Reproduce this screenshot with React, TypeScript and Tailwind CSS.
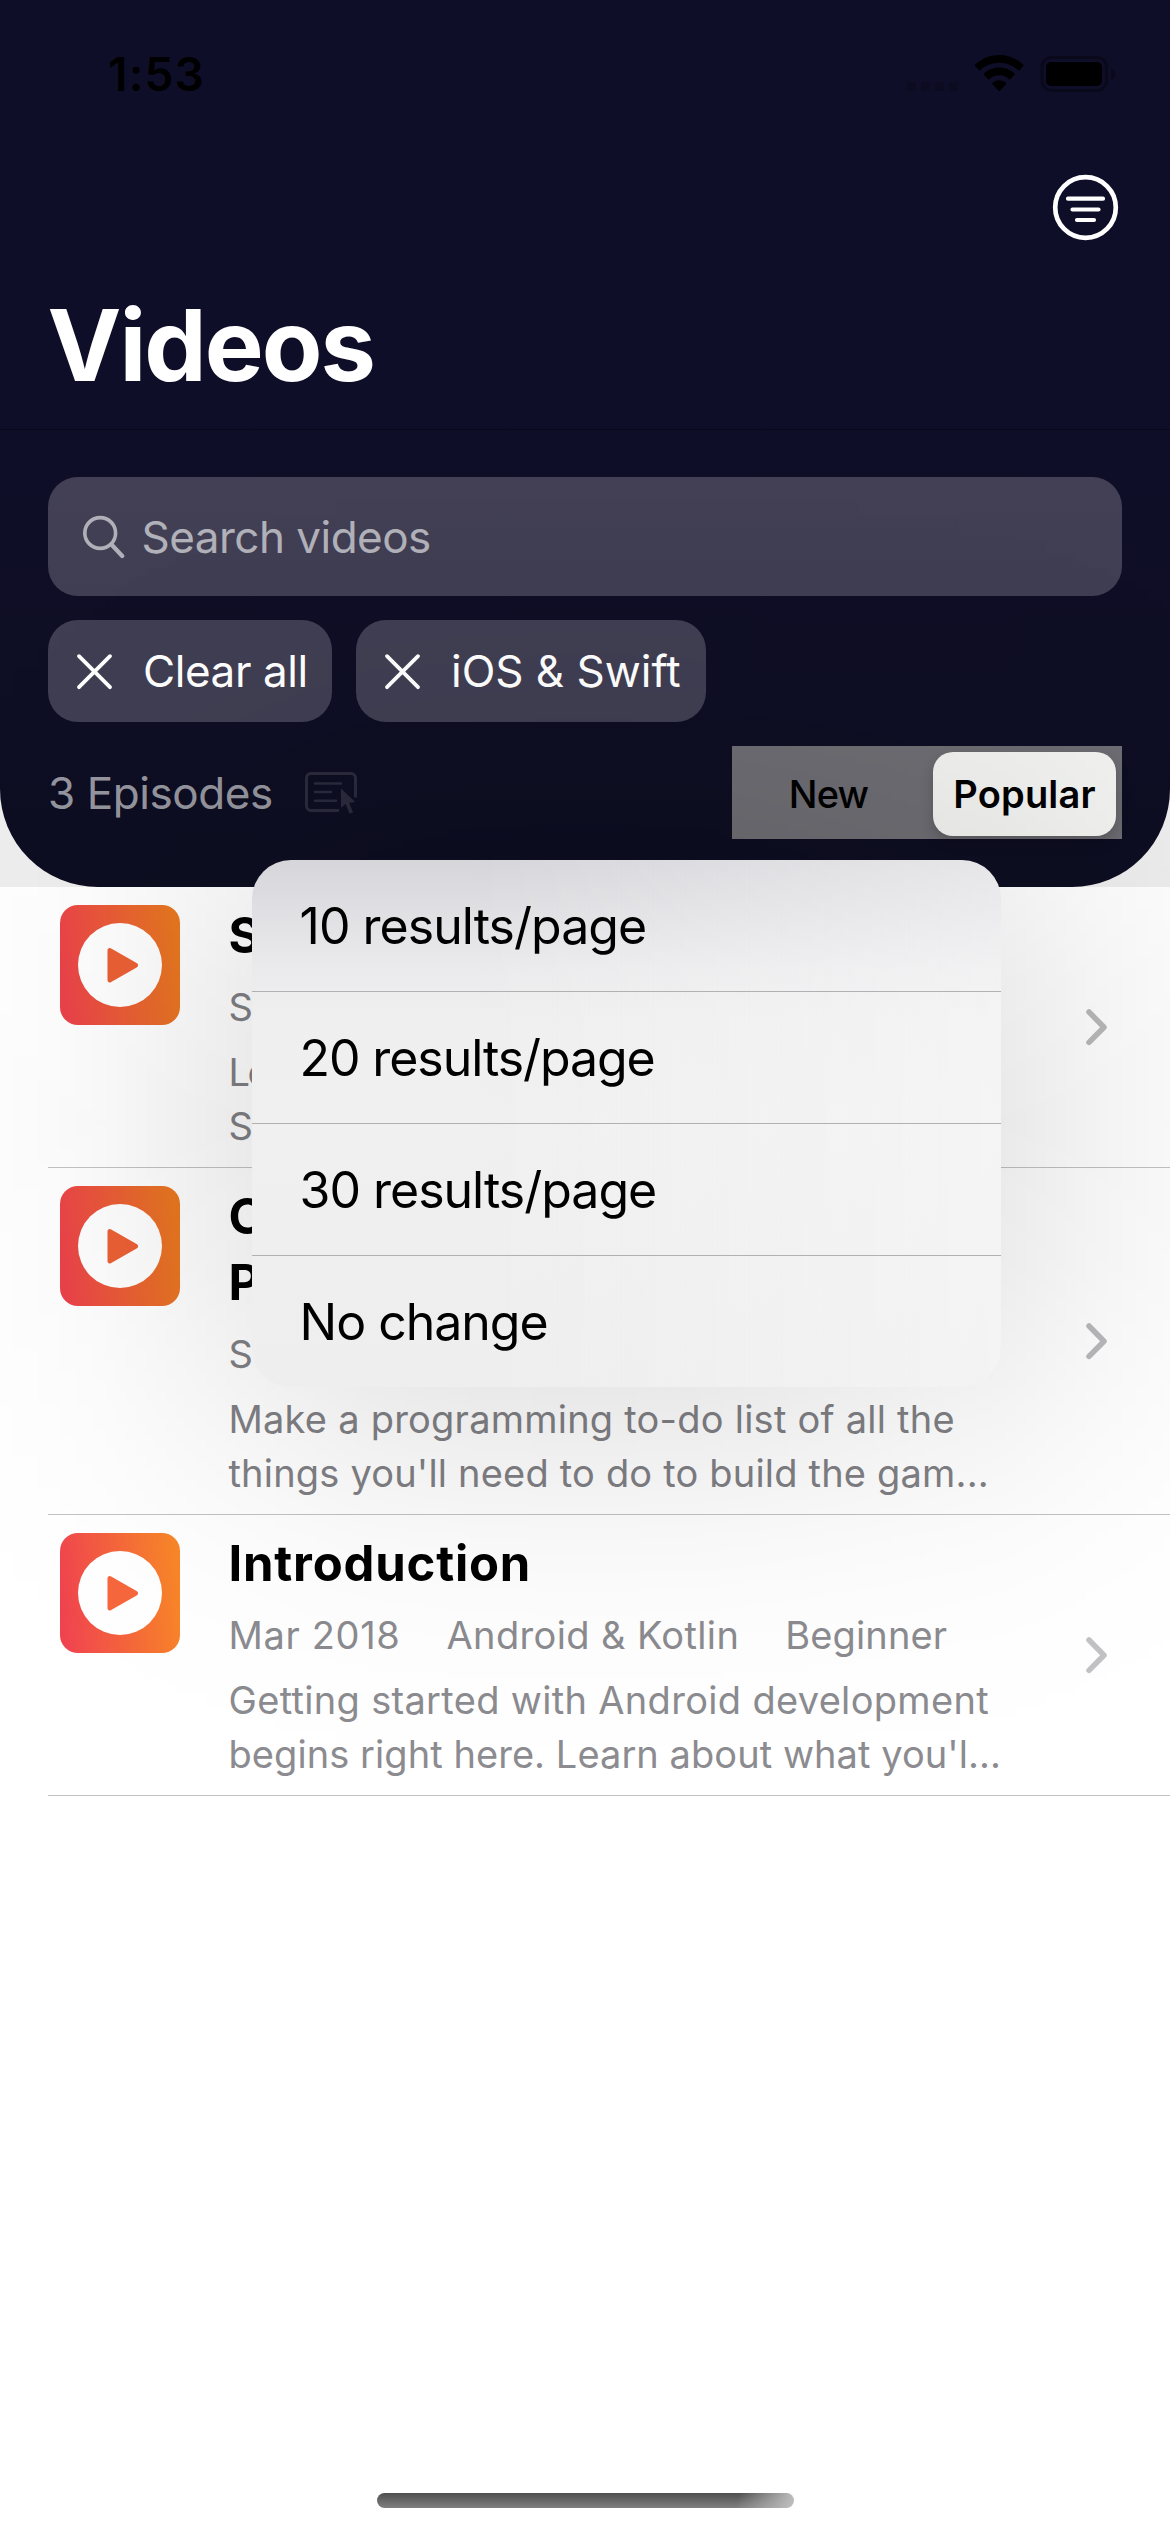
import React from "react";

function StatusBar() {
  return (
    <div className="flex h-[104px] justify-between pl-[108px] pr-[54px] text-black">
      <div className="mt-[44px] text-[46px] leading-[60px] font-semibold tracking-[1.18px]">1:53</div>
      <svg className="mt-[52px] h-[44px] w-[209px]" viewBox="907 52 209 44" fill="none">
        <g fill="#0c0b20">
          <rect x="907" y="82" width="9" height="9" rx="2.5" />
          <rect x="921" y="82" width="9" height="9" rx="2.5" />
          <rect x="935" y="82" width="9" height="9" rx="2.5" />
          <rect x="949" y="82" width="9" height="9" rx="2.5" />
        </g>
        <g fill="#000">
          <path d="M999.2 55c-9.400 0-17.900 3.700-24.200 9.700-.4.4-.4.8 0 1.200l3.900 4.300c.4.400.9.400 1.300 0 5-4.700 11.700-7.500 19-7.500s14 2.800 19 7.500c.4.400.900.400 1.300 0l3.900-4.300c.4-.4.4-.8 0-1.200-6.300-6-14.800-9.700-24.200-9.700z" />
          <path d="M999.2 67.600c-5.900 0-11.300 2.300-15.300 6-.4.4-.4.8 0 1.200l4.200 4.400c.4.400.8.400 1.200.1 2.600-2.500 6.100-4 9.900-4s7.300 1.500 9.900 4c.4.300.8.300 1.200-.1l4.200-4.400c.4-.4.4-.8 0-1.200-4-3.700-9.400-6-15.300-6z" />
          <path d="M999.2 80.300c-2.600 0-5 1-6.800 2.700-.4.300-.4.800 0 1.200l6.200 6.500c.4.400.8.400 1.200 0l6.200-6.500c.4-.4.4-.9 0-1.200-1.800-1.700-4.200-2.700-6.800-2.700z" />
        </g>
        <rect x="1042" y="57.500" width="64.500" height="33" rx="9.500" stroke="#0a091b" strokeWidth="3" />
        <path d="M1111 68.500c2.600 1 4.200 3 4.200 5.700s-1.600 4.700-4.200 5.700z" fill="#0a091b" />
        <rect x="1046" y="62" width="56" height="24" rx="5" fill="#000" />
      </svg>
    </div>
  );
}

function NavBar() {
  return (
    <div className="flex h-[326px] flex-col border-b border-[#0a091c]">
      <div className="flex justify-end pt-[70px] pr-[51px]">
        <svg className="h-[67px] w-[67px]" viewBox="0 0 67 67" fill="none" stroke="#fff" strokeLinecap="round">
          <circle cx="33.500" cy="33.500" r="30.300" strokeWidth="4.700" />
          <path d="M16 24.700h35M20.500 35.500h26M25 46h17" strokeWidth="4.200" />
        </svg>
      </div>
      <h1 className="mt-[44px] pl-[47.600px] text-[99px] leading-[120px] font-bold tracking-[-2.010px] text-white">Videos</h1>
    </div>
  );
}

function Chip({ label, className }: { label: string; className: string }) {
  return (
    <div className={"flex h-[102px] items-center rounded-[30px] bg-[#403e52] pl-[27px] text-[44px] leading-[54px] text-white " + className}>
      <svg className="mr-[29px] h-[39px] w-[39px] shrink-0" viewBox="0 0 39 39" stroke="#fff" strokeWidth="3.800" strokeLinecap="round">
        <path d="M4 4.200l31 31M35 4.200l-31 31" />
      </svg>
      <span className="whitespace-nowrap">{label}</span>
    </div>
  );
}

function PlainPageIcon() {
  return (
    <svg className="h-[44px] w-[54px]" viewBox="304 771 54 44" fill="none" stroke="#fff" strokeOpacity="0.12" strokeWidth="3">
      <path d="M339 810.500h-28a4.500 4.500 0 0 1-4.500-4.500v-28a4.500 4.500 0 0 1 4.500-4.500h40a4.500 4.500 0 0 1 4.500 4.500v19.500" />
      <path d="M315 783.500h26M315 792h16M315 800.700h21" strokeWidth="2.600" strokeLinecap="round" />
      <path d="M341 788.500v19.200l4.700-3.700 3.800 9.700 3.600-1.500-4-9.400 6.100-.7z" fill="#fff" fillOpacity="0.12" stroke="none" />
    </svg>
  );
}

function FilterPanel() {
  return (
    <div className="h-[457px] bg-[#eeeeee]">
      <div className="flex h-full flex-col rounded-b-[98px] bg-linear-to-b from-[#0f0e28] to-[#0e0e22] px-12 pt-[47px]">
        <div className="flex h-[119px] shrink-0 items-center rounded-[30px] bg-linear-to-b from-[#434055] to-[#403e53] pl-[34px] text-white/60">
          <svg className="mr-[17px] h-[44px] w-[42.500px]" viewBox="82 515 42.500 44" fill="none" stroke="#b1b0b9" strokeWidth="3.600" strokeLinecap="round">
            <circle cx="100.200" cy="533" r="15.400" />
            <path d="M111.500 544.500l10.700 11.500" strokeWidth="4.200" />
          </svg>
          <span className="text-[44px] leading-[54px] tracking-[-0.510px]">Search videos</span>
        </div>
        <div className="mt-6 flex gap-6">
          <Chip label="Clear all" className="w-[284px] tracking-[-0.420px]" />
          <Chip label="iOS &amp; Swift" className="w-[350px] tracking-[-0.010px]" />
        </div>
        <div className="mt-6 flex h-[93px] items-center">
          <span className="text-[44px] leading-[54px] tracking-[-0.410px] text-white/58">3 Episodes</span>
          <span className="ml-[31px]"><PlainPageIcon /></span>
          <div className="ml-auto flex h-full w-[390px] items-center bg-[#6d6d73] pt-[2px] pr-[6px] text-[38px] leading-[46px] text-black">
            <span className="flex-1 pr-[8px] text-center font-medium tracking-[-0.770px]">New</span>
            <span className="flex h-[84px] w-[183px] items-center justify-center rounded-[20px] bg-[#f2f2f1] font-semibold tracking-[0.150px] shadow-[0_6px_14px_rgba(0,0,0,0.18)]">
              Popular
            </span>
          </div>
        </div>
      </div>
    </div>
  );
}

function Thumbnail({ shaded }: { shaded: boolean }) {
  const id = shaded ? "thumb-shaded" : "thumb";
  return (
    <svg className="mt-[18px] h-[120px] w-[120px] shrink-0" viewBox="0 0 120 120">
      <defs>
        <linearGradient id={id} x1="0" y1="0.560" x2="1" y2="0.440">
          <stop offset="0" stopColor={shaded ? "#eb424b" : "#f04350"} />
          <stop offset="1" stopColor={shaded ? "#ea7920" : "#f98728"} />
        </linearGradient>
      </defs>
      <rect width="120" height="120" rx="18" fill={`url(#${id})`} />
      <circle cx="60" cy="60" r="42" fill="#fff" />
      <path d="M47.500 45.500c0-2.200 1.800-3.200 3.700-2l25.400 14.500c2 1.200 2 3.400 0 4.600l-25.400 14.300c-1.900 1.200-3.700.2-3.700-2z" fill={shaded ? "#ec6035" : "#f6673e"} />
    </svg>
  );
}

type Line = { text: string; className: string };
type Episode = { title: string[]; meta: Line[]; lines: Line[]; shaded: boolean };

const episodes: Episode[] = [
  {
    shaded: true,
    title: ["SwiftUI"],
    meta: [{ text: "Sep 2020", className: "tracking-[0.650px]" }],
    lines: [
      { text: "Learn the basics of", className: "tracking-[-2.500px]" },
      { text: "SwiftUI.", className: "tracking-[0.200px]" },
    ],
  },
  {
    shaded: true,
    title: ["Create a", "Programming List"],
    meta: [{ text: "Sep 2020", className: "tracking-[0.650px]" }],
    lines: [
      { text: "Make a programming to-do list of all the", className: "tracking-[0.230px]" },
      { text: "things you'll need to do to build the gam...", className: "tracking-[0.190px]" },
    ],
  },
  {
    shaded: false,
    title: ["Introduction"],
    meta: [
      { text: "Mar 2018", className: "tracking-[0.650px]" },
      { text: "Android & Kotlin", className: "tracking-[0.370px]" },
      { text: "Beginner", className: "tracking-[0.150px]" },
    ],
    lines: [
      { text: "Getting started with Android development", className: "tracking-[0.320px]" },
      { text: "begins right here. Learn about what you'l...", className: "tracking-[0.060px]" },
    ],
  },
];

function EpisodeRow({ episode }: { episode: Episode }) {
  const tone = episode.shaded ? "text-[#808085]" : "text-[#8b8b90]";
  return (
    <li className="ml-12 flex border-b border-[#c3c3c5] pl-3 whitespace-nowrap">
      <Thumbnail shaded={episode.shaded} />
      <div className={"ml-[48.500px] flex-1 pt-4 pb-[14px] " + tone}>
        {episode.title.map((t) => (
          <div key={t} className="text-[49px] leading-[66px] font-bold tracking-[0.800px] text-black">{t}</div>
        ))}
        <div className="mt-[11px] flex gap-[46px] text-[38px] leading-[54px]">
          {episode.meta.map((m) => <span key={m.text} className={m.className}>{m.text}</span>)}
        </div>
        <div className="mt-[11px] text-[38px] leading-[54px]">
          {episode.lines.map((l) => <div key={l.text} className={l.className}>{l.text}</div>)}
        </div>
      </div>
      <svg className="mr-[62px] h-[38px] w-[23px] self-center" viewBox="0 0 23 38" fill="none" stroke={episode.shaded ? "#b9b9bb" : "#c2c2c4"} strokeWidth="5.500" strokeLinecap="round" strokeLinejoin="round">
        <path d="M4 4l15 15.200L4 34.400" />
      </svg>
    </li>
  );
}

/* Soft shadow behind the menu: horizontal falloff masked by a vertical one. */
function MenuShadow() {
  return (
    <div className="pointer-events-none absolute top-[440px] left-0 h-[1367px] w-[1170px] bg-[linear-gradient(90deg,rgba(0,0,0,0.010)_0px,rgba(0,0,0,0.019)_51px,rgba(0,0,0,0.031)_101px,rgba(0,0,0,0.050)_151px,rgba(0,0,0,0.070)_201px,rgba(0,0,0,0.092)_251px,rgba(0,0,0,0.137)_371px,rgba(0,0,0,0.158)_480px,rgba(0,0,0,0.162)_585px,rgba(0,0,0,0.158)_690px,rgba(0,0,0,0.137)_799px,rgba(0,0,0,0.092)_1001px,rgba(0,0,0,0.070)_1051px,rgba(0,0,0,0.050)_1101px,rgba(0,0,0,0.031)_1170px)] [mask-image:linear-gradient(180deg,rgba(0,0,0,0)_0px,rgba(0,0,0,0.014)_70px,rgba(0,0,0,0.031)_120px,rgba(0,0,0,0.063)_170px,rgba(0,0,0,0.115)_220px,rgba(0,0,0,0.190)_270px,rgba(0,0,0,0.300)_320px,rgba(0,0,0,0.420)_370px,rgba(0,0,0,0.550)_420px,rgba(0,0,0,0.800)_540px,rgba(0,0,0,0.940)_683px,rgba(0,0,0,0.800)_827px,rgba(0,0,0,0.550)_947px,rgba(0,0,0,0.420)_997px,rgba(0,0,0,0.300)_1047px,rgba(0,0,0,0.190)_1097px,rgba(0,0,0,0.115)_1147px,rgba(0,0,0,0.063)_1197px,rgba(0,0,0,0.031)_1247px,rgba(0,0,0,0.014)_1297px,rgba(0,0,0,0)_1367px)]" />
  );
}

function PageSizeMenu() {
  const item = "flex items-center pl-12 text-[50px] leading-[60px] text-black ";
  const divided = "h-[132px] border-b border-[#b1b1b3] ";
  return (
    <div className="absolute top-[860px] left-[251.500px] w-[749.500px] rounded-[39px] bg-[linear-gradient(90deg,rgba(250,250,250,0)_30%,rgba(250,250,250,0.450)_100%),linear-gradient(180deg,#d6d5da_0%,#dedee2_8%,#ebebed_21%,#efefef_30%,#f0f0f0_50%,#eeeeee_100%)]">
      <div className={item + divided + "tracking-[-0.960px]"}>10 results/page</div>
      <div className={item + divided + "tracking-[-1.080px]"}>20 results/page</div>
      <div className={item + divided + "tracking-[-1px]"}>30 results/page</div>
      <div className={item + "h-[131px] tracking-[-1.020px]"}>No change</div>
    </div>
  );
}

export default function App() {
  return (
    <div className="relative flex h-[2532px] w-[1170px] flex-col overflow-hidden bg-white font-['Inter',sans-serif]">
      <div className="bg-[#0f0e28]">
        <StatusBar />
        <NavBar />
      </div>
      <FilterPanel />
      <ul>
        {episodes.map((e) => <EpisodeRow key={e.title[0]} episode={e} />)}
      </ul>
      <div className="mx-auto mt-auto mb-6 h-[15px] w-[417px] rounded-full bg-[linear-gradient(105deg,rgba(187,187,187,0)_86%,#bbbbbb_99%),linear-gradient(180deg,#4f4f4f,#808080)]" />
      <MenuShadow />
      <PageSizeMenu />
    </div>
  );
}
